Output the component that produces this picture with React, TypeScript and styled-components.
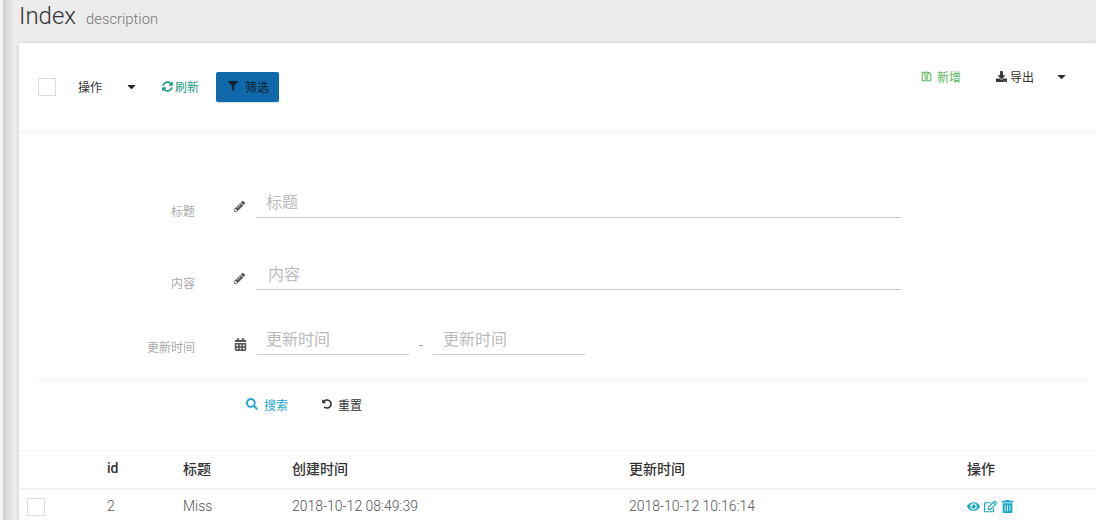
import React from 'react';
import styled, { createGlobalStyle } from 'styled-components';
import { FaRegSave, FaSyncAlt, FaFilter, FaDownload, FaPencilAlt, FaCalendarAlt, FaSearch, FaUndoAlt, FaEye, FaRegEdit, FaTrashAlt, FaCaretDown } from 'react-icons/fa';

const Global = createGlobalStyle`
  html, body { margin: 0; padding: 0; height: 520px; overflow: hidden; background: #ececec; }
  body { font-family: Roboto, "Noto Sans CJK SC", sans-serif; }
  * { box-sizing: border-box; }
`;
const Page = styled.div`
  height: 520px; display: flex; background: #ececec; overflow: hidden;
`;
const Rail = styled.div`
  width: 3px; flex: none; background: #f4f4f4;
`;
const Main = styled.div`
  flex: 1; min-width: 0; padding-left: 16px; display: flex; flex-direction: column;
  background: linear-gradient(90deg,#cfcfcf,#ececec 11px);
`;
const Header = styled.div`
  height: 43px; flex: none; display: flex; align-items: baseline; gap: 10px; padding-top: 1px;
`;
const Title = styled.h1`
  margin: 0; font-size: 24px; font-weight: 300; color: #333; line-height: 31px;
`;
const Sub = styled.span`
  font-size: 14.8px; font-weight: 300; color: #777;
`;
const Card = styled.div`
  flex: 1; background: #fff; border-radius: 2px 0 0 0; box-shadow: 0 0 4px rgba(0,0,0,.14);
  display: flex; flex-direction: column; min-height: 0;
`;
const Toolbar = styled.div`
  height: 89px; flex: none; border-bottom: 1px solid #f2f2f2; display: flex; justify-content: space-between; padding: 0 28px 0 19px;
`;
const ToolGroup = styled.div`
  display: flex; align-items: flex-start; padding-top: 29px; height: 100%;
`;
const Check = styled.span<{ $top?: number }>`
  width: 18px; height: 18px; border: 1px solid #dcdcdc; background: #fff; display: block; flex: none;
  margin-top: ${p => p.$top ?? 0}px;
`;
const ToolBtn = styled.span<{ $color?: string; $ml?: number; $gap?: number; $top?: number }>`
  display: inline-flex; align-items: center; height: 30px; font-size: 12px; white-space: nowrap;
  color: ${p => p.$color || '#333'};
  margin-left: ${p => p.$ml || 0}px;
  gap: ${p => p.$gap ?? 0}px;
  margin-top: ${p => p.$top ?? 0}px;
`;
const Primary = styled.span`
  display: inline-flex; align-items: center; gap: 7px; width: 63px; height: 30px; margin-left: 17px; padding: 0 0 2px 12px;
  background: #0f69aa; color: #10212e; font-size: 12px; border-radius: 2px; box-shadow: 0 1px 1px rgba(0,0,0,.15);
`;
const Form = styled.div`
  height: 318px; flex: none; padding: 52px 8px 0 19px; display: flex; flex-direction: column;
`;
const Field = styled.div<{ $h: number }>`
  height: ${p => p.$h}px; flex: none; display: grid; grid-template-columns: 157px 61px 1fr; align-items: start;
`;
const Label = styled.div<{ $top: number }>`
  font-size: 12px; line-height: 16px; color: #a9a9a9; text-align: right; padding-top: ${p => p.$top}px;
`;
const IconCell = styled.div<{ $size: number }>`
  padding: 17px 0 0 39px; color: #555; font-size: ${p => p.$size}px; line-height: 1;
`;
const InputLine = styled.div<{ $w: number; $pl: number }>`
  width: ${p => p.$w}px; height: 36px; margin-top: -2px; border-bottom: 1px solid #ccc; color: #bbb; font-size: 16px;
  padding: 12px 0 0 ${p => p.$pl}px; line-height: 18px; flex: none;
`;
const Range = styled.div`
  display: flex; align-items: flex-start; padding-left: 1px;
`;
const Dash = styled.span`
  width: 24px; text-align: center; color: #777; font-size: 11px; padding-top: 18px; flex: none;
`;
const Actions = styled.div`
  border-top: 1px solid #f2f2f2; height: 70px; flex: none; display: flex; align-items: flex-start; padding: 14px 0 0 208px; gap: 34px;
`;
const Act = styled.span<{ $color: string }>`
  display: inline-flex; align-items: center; gap: 6px; height: 18px; font-size: 12px; color: ${p => p.$color}; white-space: nowrap;
`;
const Table = styled.div`
  display: flex; flex-direction: column; border-top: 1px solid #f2f2f2;
`;
const Row = styled.div<{ $head?: boolean }>`
  display: grid; grid-template-columns: 88px 76px 109px 337px 338px 1fr; align-items: center; flex: none;
  height: ${p => (p.$head ? '39px' : '34px')};
  padding-bottom: ${p => (p.$head ? '3px' : '2px')};
  font-size: 14px; font-weight: ${p => (p.$head ? 500 : 300)}; color: ${p => (p.$head ? '#333' : '#555')};
  border-bottom: ${p => (p.$head ? '2px solid #f2f2f2' : 'none')};
`;
const CheckCell = styled.div`
  padding-left: 8px; padding-top: 1px;
`;
const RowIcons = styled.div`
  display: flex; gap: 4px; color: #17a7c7; font-size: 13px; align-items: center;
`;

export default function App() {
  return (
    <Page>
      <Global />
      <Rail />
      <Main>
        <Header>
          <Title>Index</Title>
          <Sub>description</Sub>
        </Header>
        <Card>
          <Toolbar>
            <ToolGroup>
              <Check $top={6} />
              <ToolBtn $ml={22} $top={-1}>操作</ToolBtn>
              <ToolBtn $ml={23} $top={-1} $color="#222"><FaCaretDown size={13} /></ToolBtn>
              <ToolBtn $ml={24} $top={-1} $color="#1f9a83" $gap={2}><FaSyncAlt size={11} />刷新</ToolBtn>
              <Primary><FaFilter size={10} />筛选</Primary>
            </ToolGroup>
            <ToolGroup>
              <ToolBtn $color="#5cb85c" $gap={5} $top={-11}><FaRegSave size={11} />新增</ToolBtn>
              <ToolBtn $ml={35} $gap={3} $top={-11}><FaDownload size={11} />导出</ToolBtn>
              <ToolBtn $ml={21} $top={-11}><FaCaretDown size={13} /></ToolBtn>
            </ToolGroup>
          </Toolbar>
          <Form>
            <Field $h={72}>
              <Label $top={20}>标题</Label>
              <IconCell $size={11}><FaPencilAlt /></IconCell>
              <InputLine $w={645} $pl={10}>标题</InputLine>
            </Field>
            <Field $h={65}>
              <Label $top={20}>内容</Label>
              <IconCell $size={11}><FaPencilAlt /></IconCell>
              <InputLine $w={645} $pl={12}>内容</InputLine>
            </Field>
            <Field $h={59}>
              <Label $top={19}>更新时间</Label>
              <IconCell $size={13}><FaCalendarAlt /></IconCell>
              <Range>
                <InputLine $w={152} $pl={9}>更新时间</InputLine>
                <Dash>-</Dash>
                <InputLine $w={152} $pl={10}>更新时间</InputLine>
              </Range>
            </Field>
            <Actions>
              <Act $color="#22a7d6"><FaSearch size={12} />搜索</Act>
              <Act $color="#333"><FaUndoAlt size={10} />重置</Act>
            </Actions>
          </Form>
          <Table>
            <Row $head>
              <span />
              <span>id</span>
              <span>标题</span>
              <span>创建时间</span>
              <span>更新时间</span>
              <span>操作</span>
            </Row>
            <Row>
              <CheckCell><Check /></CheckCell>
              <span>2</span>
              <span>Miss</span>
              <span>2018-10-12 08:49:39</span>
              <span>2018-10-12 10:16:14</span>
              <RowIcons><FaEye /><FaRegEdit /><FaTrashAlt /></RowIcons>
            </Row>
          </Table>
        </Card>
      </Main>
    </Page>
  );
}
